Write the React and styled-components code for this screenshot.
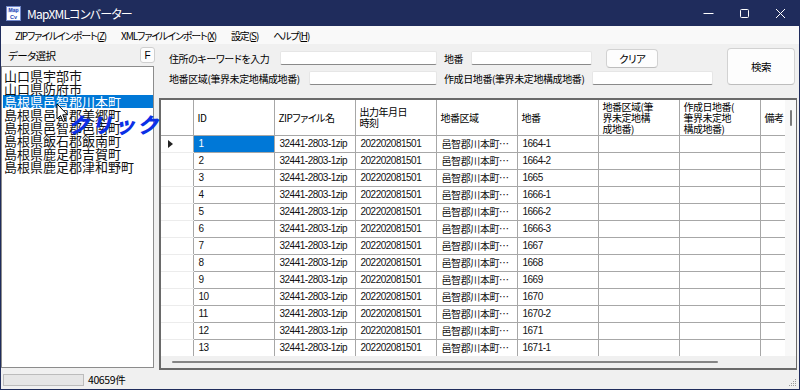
import styled, { createGlobalStyle } from 'styled-components'

const GlobalStyle = createGlobalStyle`
  html, body {
    margin: 0;
    padding: 0;
    background: #f0f0f0;
  }
  body {
    font-family: "Noto Sans CJK JP", "Noto Sans", sans-serif;
    font-feature-settings: "palt";
    color: #000;
  }
  * { box-sizing: border-box; }
`

const NAVY = "#1f2c5c"

const prefectures = [
  "山口県宇部市",
  "山口県防府市",
  "島根県邑智郡川本町",
  "島根県邑智郡美郷町",
  "島根県邑智郡邑南町",
  "島根県飯石郡飯南町",
  "島根県鹿足郡吉賀町",
  "島根県鹿足郡津和野町",
]

const columns = [
  { key: "id", label: "ID" },
  { key: "zip", label: "ZIPファイル名" },
  { key: "date", label: "出力年月日\n時刻" },
  { key: "area", label: "地番区域" },
  { key: "num", label: "地番" },
  { key: "area2", label: "地番区域(筆\n界未定地構\n成地番)" },
  { key: "num2", label: "作成日地番(\n筆界未定地\n構成地番)" },
  { key: "note", label: "備考" },
]

const lotNumbers = ["1664-1", "1664-2", "1665", "1666-1", "1666-2", "1666-3", "1667", "1668", "1669", "1670", "1670-2", "1671", "1671-1", "1672"]

const rows = lotNumbers.map((num, i) => ({
  id: String(i + 1),
  zip: "32441-2803-1zip",
  date: "202202081501",
  area: "邑智郡川本町大字因原",
  num,
  area2: "",
  num2: "",
  note: "",
}))

const Window = styled.div`
  width: 800px;
  height: 390px;
  display: flex;
  flex-direction: column;
  border: 1px solid ${NAVY};
  border-top: none;
  background: #f0f0f0;
  overflow: hidden;
`

const TitleBar = styled.div`
  height: 26px;
  flex: none;
  display: flex;
  align-items: center;
  background: ${NAVY};
  color: #fff;
  padding-left: 5px;
`

const Title = styled.span`
  font-size: 12px;
  margin-left: 6px;
  letter-spacing: -0.8px;
`

const WindowControls = styled.div`
  margin-left: auto;
  display: flex;
  height: 100%;
  margin-right: 1px;
`

const ControlButton = styled.div`
  width: 36px;
  height: 100%;
  display: flex;
  align-items: center;
  justify-content: center;
`

const MenuBar = styled.div`
  height: 18px;
  flex: none;
  display: flex;
  align-items: center;
  gap: 15px;
  padding-left: 14px;
  background: #f9f9f9;
  font-size: 10px;
  letter-spacing: -1.1px;
`

const MenuItem = styled.span`
  u { text-decoration-thickness: 1px; text-underline-offset: 1px; }
`

const Main = styled.div`
  flex: 1;
  display: flex;
  position: relative;
  min-height: 0;
`

const LeftPanel = styled.div`
  width: 158px;
  flex: none;
  display: flex;
  flex-direction: column;
  padding: 0 0 2px 0;
`

const LeftHeader = styled.div`
  height: 22px;
  display: flex;
  align-items: center;
  padding: 0 4px 0 7px;
  font-size: 10.5px;
  letter-spacing: -0.6px;
`

const SmallButton = styled.div`
  margin-left: auto;
  width: 15px;
  height: 16px;
  border: 1px solid #cfcfcf;
  border-radius: 3px;
  background: #fdfdfd;
  display: flex;
  align-items: center;
  justify-content: center;
  font-size: 10px;
  letter-spacing: 0;
  font-family: "Liberation Sans", sans-serif;
`

const ListBox = styled.div`
  flex: 1;
  width: 153px;
  background: #fff;
  border: 1px solid #8c8c8c;
  padding: 2px 0 0 1px;
`

const ListItem = styled.div`
  height: 13px;
  line-height: 13px;
  font-size: 13px;
  padding-left: 1px;
  white-space: nowrap;
  font-feature-settings: normal;
  background: ${p => (p.selected ? "#0078d7" : "transparent")};
  color: ${p => (p.selected ? "#fff" : "#111")};
`

const RightPanel = styled.div`
  flex: 1;
  display: flex;
  flex-direction: column;
  padding-right: 2px;
  min-width: 0;
`

const SearchArea = styled.div`
  height: 54px;
  flex: none;
  display: flex;
  padding: 4px 0 0 10px;
`

const Fields = styled.div`
  display: grid;
  grid-template-columns: 268px auto;
  grid-template-rows: 20px 20px;
  column-gap: 7px;
`

const Field = styled.div`
  display: flex;
  align-items: center;
  font-size: 10px;
  letter-spacing: -0.4px;
  white-space: nowrap;
`

const Label = styled.span`
  flex: none;
`

const TextBox = styled.div`
  height: 14px;
  width: ${p => p.w}px;
  flex: none;
  margin-left: ${p => (p.push ? "auto" : "8px")};
  background: #fff;
  border: 1px solid #e6e6e6;
  border-bottom: 1px solid #8a8a8a;
  border-radius: 2px;
`

const Button = styled.div`
  width: ${p => p.w}px;
  height: ${p => p.h}px;
  margin-left: ${p => p.ml || 0}px;
  flex: none;
  display: flex;
  align-items: center;
  justify-content: center;
  background: #fdfdfd;
  border: 1px solid #d2d2d2;
  border-bottom-color: #bdbdbd;
  border-radius: 4px;
  font-size: 10.5px;
  letter-spacing: -0.5px;
`

const SearchButton = styled(Button)`
  margin-left: auto;
  margin-right: 2px;
`

const GridFrame = styled.div`
  flex: 1;
  display: grid;
  grid-template-columns: 1fr 11px;
  grid-template-rows: 1fr 12px;
  border-left: 2px solid #6a6a6a;
  border-top: 2px solid #6a6a6a;
  border-right: 1px solid #6a6a6a;
  border-bottom: 2px solid #6a6a6a;
  background: #f0f0f0;
  min-height: 0;
`

const Viewport = styled.div`
  overflow: hidden;
  background: #fff;
`

const Table = styled.table`
  table-layout: fixed;
  width: 680px;
  border-collapse: collapse;
`

const HeadCell = styled.th`
  width: ${p => p.w}px;
  height: 35px;
  padding: 0 4px;
  text-align: left;
  vertical-align: middle;
  font-weight: normal;
  font-size: 10px;
  letter-spacing: -0.5px;
  line-height: 11px;
  white-space: pre-line;
  border-right: 1px solid #a7a7a7;
  border-bottom: 1px solid #a7a7a7;
  overflow: hidden;
`

const RowHead = styled.td`
  width: 32px;
  height: 17px;
  padding: 0 0 0 6px;
  font-size: 0;
  line-height: 0;
  border-right: 1px solid #a7a7a7;
  border-bottom: 1px solid #ececec;
`

const Cell = styled.td`
  height: 17px;
  padding: 0 3px 0 5px;
  line-height: 15px;
  font-size: 10px;
  letter-spacing: ${p => (p.cjk ? "-0.4px" : "-0.5px")};
  font-family: ${p => (p.cjk ? '"Noto Sans CJK JP", sans-serif' : '"Liberation Sans", "Noto Sans CJK JP", sans-serif')};
  white-space: nowrap;
  overflow: hidden;
  text-overflow: ellipsis;
  border-right: 1px solid #a7a7a7;
  border-bottom: 1px solid #a7a7a7;
  background: ${p => (p.selected ? "#0078d7" : "#fff")};
  color: ${p => (p.selected ? "#fff" : "#111")};
`

const VScroll = styled.div`
  background: #f8f8f8;
  position: relative;
  &::after {
    content: "";
    position: absolute;
    left: 5px;
    top: 10px;
    width: 2px;
    height: 16px;
    background: #7a7a7a;
    border-radius: 1px;
  }
`

const HScroll = styled.div`
  grid-column: 1 / 3;
  background: #f0f0f0;
  display: flex;
  align-items: center;
  padding-left: 11px;
`

const HThumb = styled.div`
  width: 546px;
  height: 2px;
  background: #858585;
  border-radius: 1px;
`

const StatusBar = styled.div`
  height: 19px;
  flex: none;
  display: flex;
  align-items: center;
  padding-left: 2px;
  font-size: 10.5px;
  letter-spacing: -0.4px;
`

const Progress = styled.div`
  width: 81px;
  height: 12px;
  background: #e6e6e6;
  border: 1px solid #bcbcbc;
  margin-right: 4px;
`

const Grip = styled.div`
  margin-left: auto;
  margin-right: 2px;
  align-self: flex-end;
  margin-bottom: 2px;
  display: flex;
`

const ClickLabel = styled.div`
  position: absolute;
  left: 67px;
  top: 70px;
  font-size: 21px;
  line-height: 21px;
  font-weight: 900;
  font-style: italic;
  color: #0b2fe6;
  letter-spacing: 2px;
  font-feature-settings: normal;
  white-space: nowrap;
`

const Cursor = styled.svg`
  position: absolute;
  left: 55px;
  top: 59px;
`

const AppIcon = () => (
  <svg width="15" height="15" viewBox="0 0 15 15">
    <rect x="0.5" y="0.5" width="14" height="14" fill="#fff" stroke="#6f86c9" />
    <rect x="1.5" y="1.5" width="12" height="5" fill="#dfe6fb" />
    <text x="7.5" y="6" fontSize="5" fontFamily="Liberation Sans" fontWeight="bold" fill="#1d3fb4" textAnchor="middle">Map</text>
    <text x="7.5" y="12.5" fontSize="5.5" fontFamily="Liberation Sans" fontWeight="bold" fill="#1d3fb4" textAnchor="middle">Cv</text>
  </svg>
)

const Arrow = () => (
  <svg width="7" height="8" viewBox="0 0 7 8" style={{ display: "block" }}>
    <polygon points="1,0 6,4 1,8" fill="#222" />
  </svg>
)

const App = () => {
  return (
    <>
      <GlobalStyle />
      <Window>
        <TitleBar>
          <AppIcon />
          <Title>MapXMLコンバーター</Title>
          <WindowControls>
            <ControlButton>
              <svg width="11" height="11" viewBox="0 0 11 11"><line x1="0.5" y1="5.5" x2="10.5" y2="5.5" stroke="#fff" strokeWidth="1" /></svg>
            </ControlButton>
            <ControlButton>
              <svg width="11" height="11" viewBox="0 0 11 11"><rect x="1.5" y="1.5" width="8" height="8" rx="1" fill="none" stroke="#fff" strokeWidth="1" /></svg>
            </ControlButton>
            <ControlButton>
              <svg width="11" height="11" viewBox="0 0 11 11"><path d="M1 1 L10 10 M10 1 L1 10" stroke="#fff" strokeWidth="1" /></svg>
            </ControlButton>
          </WindowControls>
        </TitleBar>

        <MenuBar>
          <MenuItem>ZIPファイルインポート(<u>Z</u>)</MenuItem>
          <MenuItem>XMLファイルインポート(<u>X</u>)</MenuItem>
          <MenuItem>設定(<u>S</u>)</MenuItem>
          <MenuItem>ヘルプ(<u>H</u>)</MenuItem>
        </MenuBar>

        <Main>
          <LeftPanel>
            <LeftHeader>
              データ選択
              <SmallButton>F</SmallButton>
            </LeftHeader>
            <ListBox>
              {prefectures.map((p, i) => (
                <ListItem key={p} selected={i === 2}>{p}</ListItem>
              ))}
            </ListBox>
          </LeftPanel>

          <RightPanel>
            <SearchArea>
              <Fields>
                <Field>
                  <Label>住所のキーワードを入力</Label>
                  <TextBox w={157} push />
                </Field>
                <Field>
                  <Label>地番</Label>
                  <TextBox w={121} />
                  <Button w={52} h={19} ml={14}>クリア</Button>
                </Field>
                <Field>
                  <Label>地番区域(筆界未定地構成地番)</Label>
                  <TextBox w={128} push />
                </Field>
                <Field>
                  <Label>作成日地番(筆界未定地構成地番)</Label>
                  <TextBox w={121} />
                </Field>
              </Fields>
              <SearchButton w={68} h={37}>検索</SearchButton>
            </SearchArea>

            <GridFrame>
              <Viewport>
                <Table>
                  <thead>
                    <tr>
                      <HeadCell w={32} />
                      {columns.map(c => (
                        <HeadCell key={c.key} w={81}>{c.label}</HeadCell>
                      ))}
                    </tr>
                  </thead>
                  <tbody>
                    {rows.map((r, i) => (
                      <tr key={r.id}>
                        <RowHead>{i === 0 && <Arrow />}</RowHead>
                        <Cell selected={i === 0}>{r.id}</Cell>
                        <Cell>{r.zip}</Cell>
                        <Cell>{r.date}</Cell>
                        <Cell cjk>{r.area}</Cell>
                        <Cell>{r.num}</Cell>
                        <Cell>{r.area2}</Cell>
                        <Cell>{r.num2}</Cell>
                        <Cell>{r.note}</Cell>
                      </tr>
                    ))}
                  </tbody>
                </Table>
              </Viewport>
              <VScroll />
              <HScroll>
                <HThumb />
              </HScroll>
            </GridFrame>
          </RightPanel>

          <Cursor width="13" height="21" viewBox="0 0 13 21">
            <path d="M1 1 L1 16 L4.5 12.5 L7 18.5 L9.2 17.6 L6.8 11.8 L11.5 11.8 Z" fill="#fff" stroke="#000" strokeWidth="1" strokeLinejoin="round" />
          </Cursor>
          <ClickLabel>クリック</ClickLabel>
        </Main>

        <StatusBar>
          <Progress />
          40659件
          <Grip>
            <svg width="8" height="8" viewBox="0 0 8 8">
              <rect x="6" y="0" width="1" height="1" fill="#999" />
              <rect x="4" y="2" width="1" height="1" fill="#999" />
              <rect x="6" y="2" width="1" height="1" fill="#999" />
              <rect x="2" y="4" width="1" height="1" fill="#999" />
              <rect x="4" y="4" width="1" height="1" fill="#999" />
              <rect x="6" y="4" width="1" height="1" fill="#999" />
              <rect x="0" y="6" width="1" height="1" fill="#999" />
              <rect x="2" y="6" width="1" height="1" fill="#999" />
              <rect x="4" y="6" width="1" height="1" fill="#999" />
              <rect x="6" y="6" width="1" height="1" fill="#999" />
            </svg>
          </Grip>
        </StatusBar>
      </Window>
    </>
  )
}

export default App
